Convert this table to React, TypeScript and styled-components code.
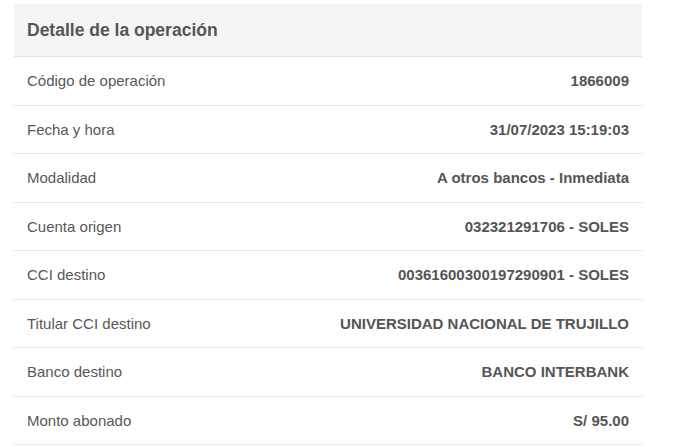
import * as React from 'react'
import styled, { createGlobalStyle } from 'styled-components'

const GlobalStyle = createGlobalStyle`
    html, body { margin: 0; padding: 0; background: #fff; }
    body { font-family: "Liberation Sans", Arial, sans-serif; }
`

interface IDetail
{
    label: string
    value: string
}

const details: IDetail[] = [
    { label: 'Código de operación', value: '1866009' },
    { label: 'Fecha y hora', value: '31/07/2023 15:19:03' },
    { label: 'Modalidad', value: 'A otros bancos - Inmediata' },
    { label: 'Cuenta origen', value: '032321291706 - SOLES' },
    { label: 'CCI destino', value: '00361600300197290901 - SOLES' },
    { label: 'Titular CCI destino', value: 'UNIVERSIDAD NACIONAL DE TRUJILLO' },
    { label: 'Banco destino', value: 'BANCO INTERBANK' },
    { label: 'Monto abonado', value: 'S/ 95.00' },
]

const App: React.FunctionComponent = () =>
{
    return (
        <Page>
            <GlobalStyle />
            <Panel>
                <Header>Detalle de la operación</Header>
                {details.map((d) => (
                    <Row key={d.label}>
                        <Label>{d.label}</Label>
                        <Value>{d.value}</Value>
                    </Row>
                ))}
            </Panel>
        </Page>
    )
}

const Page = styled.div`
    padding: 4px 31px 0 14px;
`

const Panel = styled.div`
    display: flex;
    flex-direction: column;
    width: 628px;
`

const Header = styled.div`
    height: 52px;
    display: flex;
    align-items: center;
    padding: 0 13px;
    background: #f5f5f5;
    border-bottom: 1px solid #e6e6e6;
    color: #555;
    font-size: 17.5px;
    font-weight: bold;
`

const Row = styled.div`
    height: 47.5px;
    display: flex;
    align-items: center;
    justify-content: space-between;
    padding: 0 13px;
    border-bottom: 1px solid #e8e8e8;
    font-size: 15px;
    color: #555;
`

const Label = styled.span`
    color: #585858;
`

const Value = styled.span`
    font-weight: bold;
    color: #555;
`

export default App
